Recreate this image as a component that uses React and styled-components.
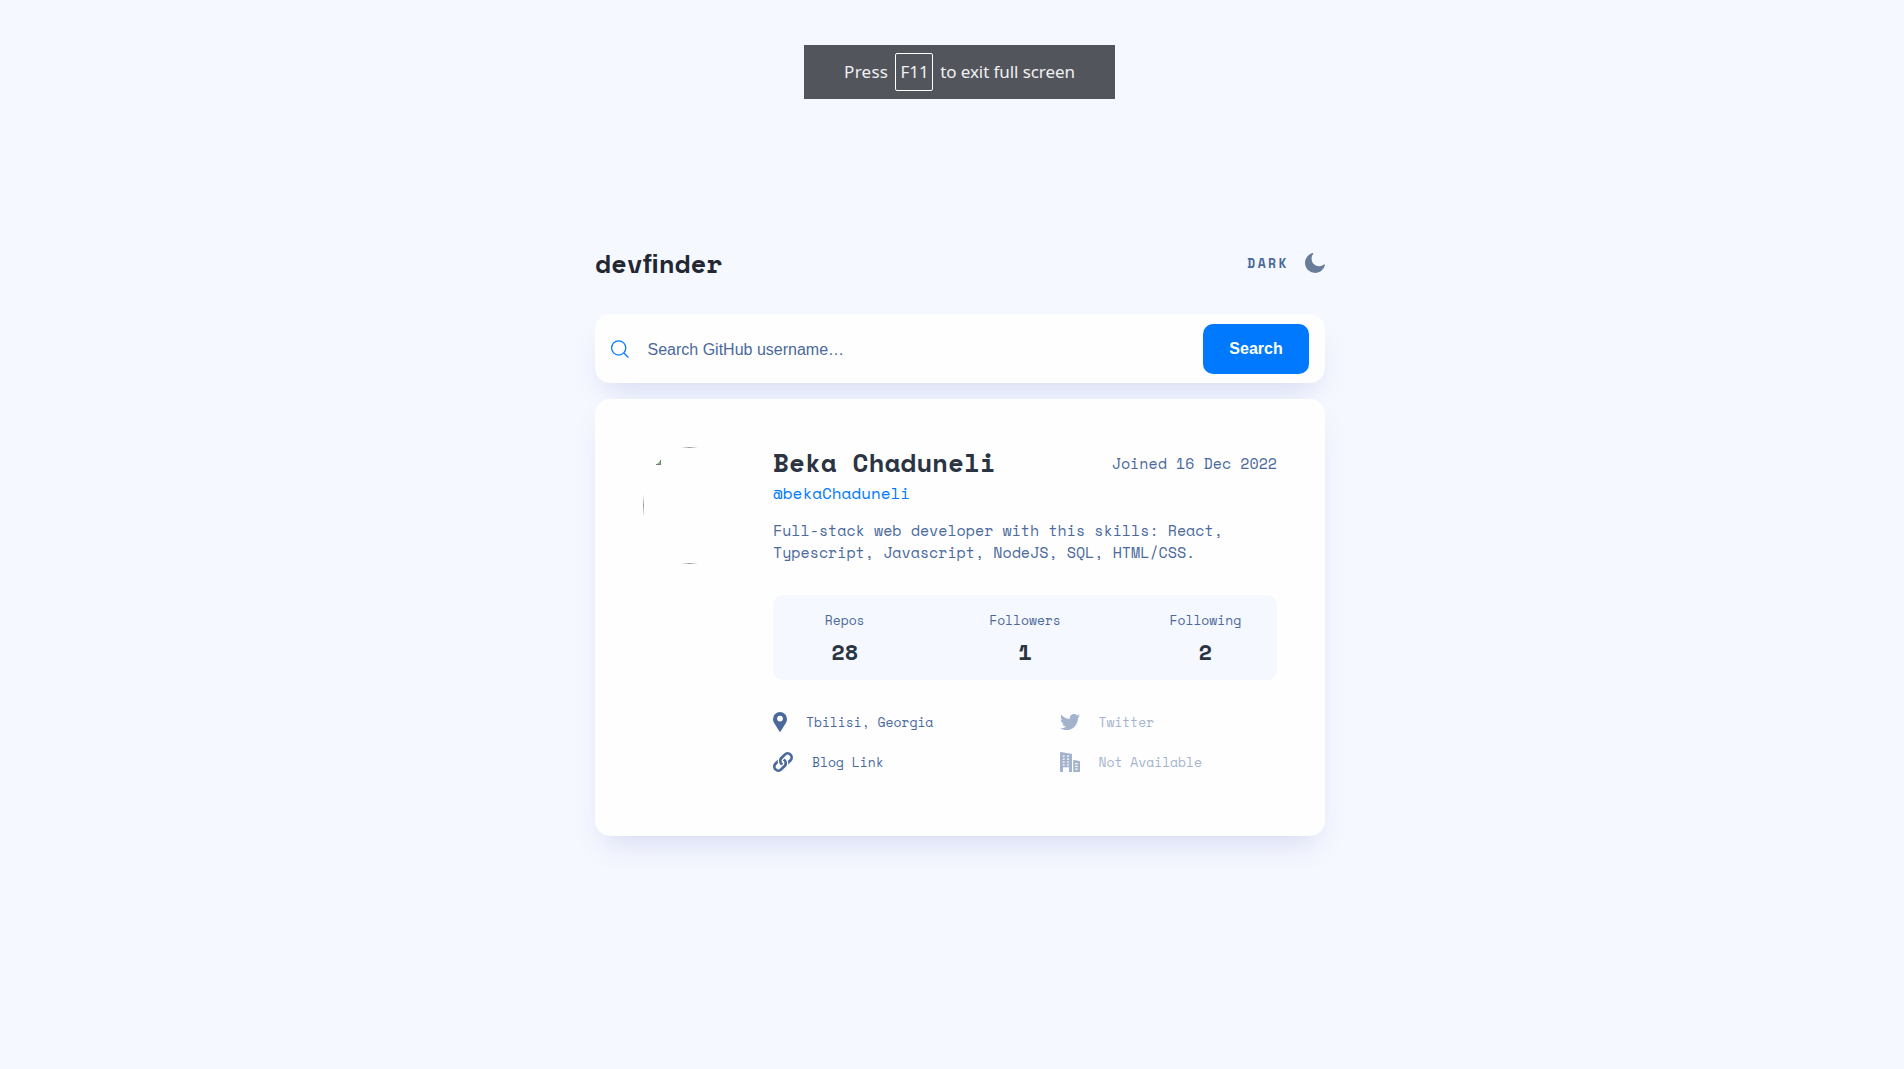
import React from "react";
import styled, { createGlobalStyle } from "styled-components";
import { FaTwitter } from "react-icons/fa";

const mono = `"Space Mono", "Liberation Mono", monospace`;

const GlobalStyle = createGlobalStyle`
  * { box-sizing: border-box; margin: 0; padding: 0; }
  body { background: #f6f8ff; font-family: ${mono}; color: #4b6a9b; }
`;

const Page = styled.div`
  height: 1069px;
  display: flex;
  flex-direction: column;
  align-items: center;
  padding-left: 16px;
  overflow: hidden;
`;
const Notice = styled.div`
  margin: 45px 1px 144px 0;
  width: 311px;
  height: 54px;
  flex: none;
  display: flex;
  align-items: center;
  justify-content: center;
  gap: 7px;
  background: #52555c;
  color: #f0f0f2;
  font: 17px "Noto Sans", sans-serif;
`;
const NoticeText = styled.span`
  letter-spacing: ${(p) => p.$tracking || 0}px;
  padding-bottom: 2px;
`;
const Key = styled.span`
  height: 38px;
  width: 38px;
  padding: 0 0 2px 1px;
  display: flex;
  align-items: center;
  justify-content: center;
  border: 1px solid #fff;
  border-radius: 2px;
`;
const Main = styled.main`
  width: 730px;
  display: flex;
  flex-direction: column;
`;
const Header = styled.header`
  height: 38px;
  margin-bottom: 33px;
  display: flex;
  justify-content: space-between;
  align-items: center;
`;
const Logo = styled.h1`
  padding-top: 2px;
  font-size: 26px;
  line-height: 38px;
  color: #222731;
`;
const Ligature = styled.span`
  font-family: "Liberation Sans", sans-serif;
  line-height: 1;
`;
const ThemeToggle = styled.button`
  display: flex;
  align-items: center;
  gap: 16px;
  padding-top: 1px;
  border: 0;
  background: none;
  font: bold 13px ${mono};
  letter-spacing: 2.5px;
  color: #4b6a9b;
`;
const SearchBar = styled.form`
  height: 69px;
  padding: 0 16px;
  display: flex;
  align-items: center;
  border-radius: 15px;
  background: #fefefe;
  box-shadow: 0 16px 30px -10px rgba(70, 96, 187, 0.2);
`;
const SearchInput = styled.input`
  flex: 1;
  margin-left: 18.5px;
  padding-top: 2px;
  border: 0;
  outline: 0;
  background: none;
  font: 16px "Liberation Sans", sans-serif;
  &::placeholder { color: #4b6a9b; opacity: 1; }
`;
const SearchButton = styled.button`
  width: 106px;
  height: 50px;
  border: 0;
  border-radius: 10px;
  background: #0079ff;
  color: #fff;
  font: bold 16px "Liberation Sans", sans-serif;
`;
const Card = styled.section`
  height: 437px;
  margin-top: 16px;
  padding: 48px;
  display: flex;
  gap: 37px;
  border-radius: 15px;
  background: #fefefe;
  box-shadow: 0 16px 30px -10px rgba(70, 96, 187, 0.2);
`;
const Details = styled.div`
  flex: 1;
`;
const NameRow = styled.div`
  display: flex;
  justify-content: space-between;
  align-items: center;
  height: 32px;
  margin-bottom: 2px;
`;
const Name = styled.h2`
  padding-bottom: 2px;
  font-size: 26px;
  line-height: 38px;
  color: #2b3442;
`;
const Joined = styled.span`
  font-size: 15px;
`;
const Handle = styled.p`
  font-size: 16px;
  line-height: 24px;
  color: #0079ff;
`;
const Bio = styled.p`
  margin-top: 14px;
  font-size: 15px;
  line-height: 22px;
`;
const Stats = styled.dl`
  height: 85px;
  margin-top: 32px;
  padding-top: 15px;
  display: grid;
  grid-template-columns: repeat(3, 1fr);
  column-gap: 37px;
  text-align: center;
  border-radius: 10px;
  background: #f6f8ff;
`;
const StatLabel = styled.dt`
  font-size: 13px;
  line-height: 20px;
`;
const StatValue = styled.dd`
  margin-top: 5px;
  font-size: 22px;
  line-height: 33px;
  font-weight: bold;
  color: #2b3442;
`;
const Contacts = styled.ul`
  margin-top: 32px;
  display: grid;
  grid-template-columns: 286.5px 1fr;
  row-gap: 20px;
  list-style: none;
`;
const Contact = styled.li`
  height: 20px;
  display: flex;
  align-items: center;
  gap: 19px;
  font-size: 13px;
  opacity: ${(p) => (p.$muted ? 0.5 : 1)};
  svg { flex: none; }
`;

const MoonIcon = () => (
  <svg width="20" height="20" viewBox="0 0 20 20" fill="#697c9a">
    <path d="M19.513 11.397a.701.701 0 00-.588.128 7.496 7.496 0 01-2.276 1.336 7.101 7.101 0 01-2.583.462 7.505 7.505 0 01-5.32-2.209 7.568 7.568 0 01-2.199-5.342c0-.873.154-1.72.41-2.49a6.904 6.904 0 011.227-2.21.657.657 0 00-.102-.924.701.701 0 00-.589-.128C5.32.61 3.427 1.92 2.072 3.666A10.158 10.158 0 000 9.83c0 2.8 1.125 5.342 2.967 7.19a10.025 10.025 0 007.16 2.98c2.353 0 4.527-.822 6.266-2.183a10.13 10.13 0 003.58-5.624.623.623 0 00-.46-.796z" />
  </svg>
);
const SearchIcon = () => (
  <svg width="18" height="18" viewBox="0 0 18 18" fill="none" stroke="#0079ff" strokeWidth="1.25">
    <circle cx="7.7" cy="7.9" r="7.1" />
    <path d="M12.8 13l4.6 4.5" />
  </svg>
);
const PinIcon = () => (
  <svg width="14" height="20" viewBox="0 0 14 20" fill="#4b6a9b">
    <path fillRule="evenodd" d="M7 0a7 7 0 0 1 7 7c0 1.7-.5 2.9-1.3 4.2L7.600 19.600q-.6.8-1.2 0L1.300 11.200C.5 9.900 0 8.700 0 7a7 7 0 0 1 7-7zm0 3.700a2.900 2.900 0 1 0 0 5.800 2.900 2.900 0 0 0 0-5.800z" />
  </svg>
);
const chainLink =
  "M7.404 5.012c-2.355 2.437-1.841 6.482.857 8.273.089.06.208.048.283-.027.568-.555 1.049-1.093 1.47-1.776a.213.213 0 00-.084-.301A2.743 2.743 0 018.878 10.139l-.003.002a2.64 2.64 0 01-.223-1.803c.168-.815 1.043-1.573 1.711-2.274l-.004-.002 2.504-2.555a2.568 2.568 0 013.648-.019 2.6 2.6 0 01.037 3.666l-1.517 1.56a.266.266 0 00-.06.273c.35 1.012.435 2.44.201 3.519-.006.03.031.05.053.028l3.228-3.295c2.062-2.105 2.044-5.508-.038-7.593a5.3 5.3 0 00-7.568.062L7.417 5z";
const LinkIcon = () => (
  <svg width="20" height="20" viewBox="0 0 20 20" fill="#4b6a9b">
    <path d={chainLink} />
    <path d={chainLink} transform="rotate(180 10 10)" />
  </svg>
);
const CompanyIcon = () => (
  <svg width="20" height="20" viewBox="0 0 20 20" fill="#4b6a9b">
    <path fillRule="evenodd" d="M0 .7C0 .2.4 0 .9 0l10.300 1.700c.5.1.8.4.8.9V20H9v-4.700H3V20H0zM2.700 3.500v1.300h2V3.500zM7 3.500v1.300h2V3.500zM2.700 6.500v1.300h2V6.500zM7 6.500v1.300h2V6.500zM2.700 9.500v1.300h2V9.500zM7 9.500v1.300h2V9.500zM2.700 12.300v1.200h2v-1.200zM7 12.300v1.200h2v-1.200zM13.200 7.700l5.800 1.200c.6.1 1 .4 1 1V19c0 .6-.4 1-1 1h-5.800zM15.200 11v1.300h2.500V11zM15.200 13.700v1.300h2.500v-1.300zM15.200 16.400v1.300h2.500v-1.300z" />
  </svg>
);
const Avatar = () => (
  <svg width="93" height="117" viewBox="0 0 93 117">
    <defs>
      <linearGradient id="across">
        <stop offset="0" stopColor="#aaa" stopOpacity="0" />
        <stop offset=".5" stopColor="#999" />
        <stop offset="1" stopColor="#aaa" stopOpacity="0" />
      </linearGradient>
      <linearGradient id="down" x2="0" y2="1">
        <stop offset="0" stopColor="#aaa" stopOpacity="0" />
        <stop offset=".5" stopColor="#999" />
        <stop offset="1" stopColor="#aaa" stopOpacity="0" />
      </linearGradient>
    </defs>
    <rect x="38" y="0" width="17" height="1" fill="url(#across)" />
    <rect x="38" y="116" width="17" height="1" fill="url(#across)" />
    <rect x="0" y="47" width="1" height="23" fill="url(#down)" />
    <path d="M13.500 17.500l4-4v4z" fill="#86b88a" />
    <path d="M13 17.500h5M17.500 13v5" stroke="#7b7b7b" fill="none" />
  </svg>
);

const stats = [["Repos", 28], ["Followers", 1], ["Following", 2]];

export default function App() {
  return (
    <>
      <GlobalStyle />
      <Page>
        <Notice>
          <NoticeText $tracking={0.25}>Press</NoticeText>
          <Key>F11</Key>
          <NoticeText $tracking={-0.08}>to exit full screen</NoticeText>
        </Notice>
        <Main>
          <Header>
            <Logo>dev<Ligature>fi</Ligature>nder</Logo>
            <ThemeToggle type="button"><span>DARK</span><MoonIcon /></ThemeToggle>
          </Header>
          <SearchBar>
            <SearchIcon />
            <SearchInput placeholder="Search GitHub username…" />
            <SearchButton type="button">Search</SearchButton>
          </SearchBar>
          <Card>
            <Avatar />
            <Details>
              <NameRow>
                <Name>Beka Chaduneli</Name>
                <Joined>Joined 16 Dec 2022</Joined>
              </NameRow>
              <Handle>@bekaChaduneli</Handle>
              <Bio>Full-stack web developer with this skills: React, Typescript, Javascript, NodeJS, SQL, HTML/CSS.</Bio>
              <Stats>
                {stats.map(([label, value]) => (
                  <div key={label}>
                    <StatLabel>{label}</StatLabel>
                    <StatValue>{value}</StatValue>
                  </div>
                ))}
              </Stats>
              <Contacts>
                <Contact><PinIcon />Tbilisi, Georgia</Contact>
                <Contact $muted><FaTwitter size={20} />Twitter</Contact>
                <Contact><LinkIcon />Blog Link</Contact>
                <Contact $muted><CompanyIcon />Not Available</Contact>
              </Contacts>
            </Details>
          </Card>
        </Main>
      </Page>
    </>
  );
}
